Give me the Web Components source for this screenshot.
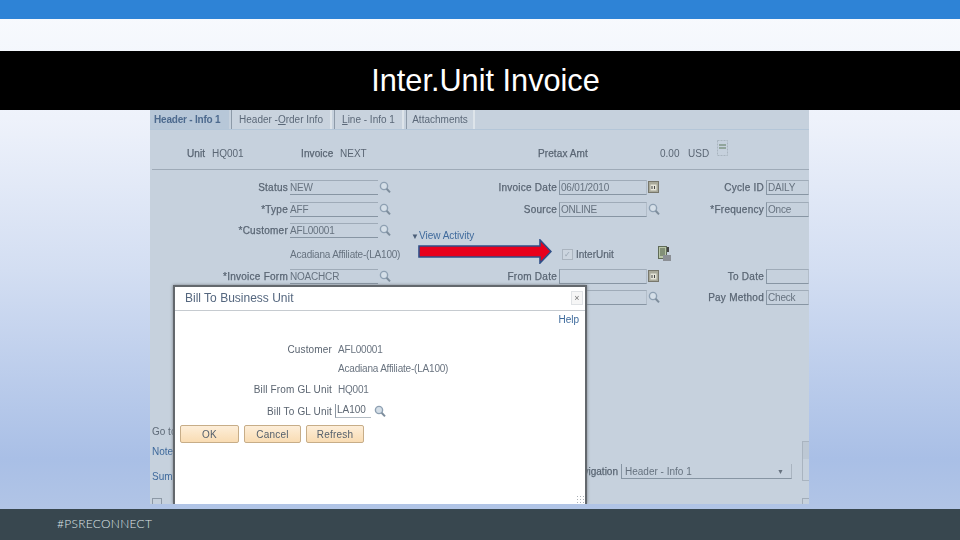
<!DOCTYPE html>
<html lang="en"><head><meta charset="utf-8"><title>Inter.Unit Invoice</title>
<style>
html,body{margin:0;padding:0;width:960px;height:540px;overflow:hidden;font-family:"Liberation Sans",Arial,sans-serif}
</style></head><body>
<psr-slide>
  <span slot="title">Inter.Unit Invoice</span>
  <span slot="footer">#PSRECONNECT</span>
  <psr-invoice></psr-invoice>
</psr-slide>
<script>
const def=(name,css,html)=>{customElements.define(name,class extends HTMLElement{
  connectedCallback(){ if(this.shadowRoot) return; const r=this.attachShadow({mode:'open'});
    r.innerHTML=`<style>${css}</style>${html}`; }
});};
const lens=`<svg width="12" height="13" viewBox="0 0 12 13" aria-hidden="true"><circle cx="5" cy="5" r="3.6" fill="#d5dfe8" stroke="#8ea0b2" stroke-width="1.4"/><path d="M7.6 7.8 11 11.4" stroke="#7d8d9c" stroke-width="2"/></svg>`;
const cal=`<svg width="11" height="12" viewBox="0 0 11 12" aria-hidden="true"><rect x=".5" y=".5" width="10" height="11" fill="#a9a99a" stroke="#77776c"/><rect x="2.5" y="3.5" width="6" height="6" fill="#e4e4d8"/><path d="M4 5v3M6.5 5v3" stroke="#444" stroke-width="1"/></svg>`;

def('psr-slide',`
 :host{display:flex;flex-direction:column;width:960px;height:540px;background:linear-gradient(#f9fbfe 0,#eef2fb 22%,#d3def2 50%,#a9bfe6 85%,#b6c8e6 100%)}
 .top{height:19px;background:#2e83d6;flex:none}
 .gap{height:32px;flex:none}
 .title{height:59px;flex:none;background:#000;color:#fff;display:flex;align-items:center;justify-content:center;font:30.7px "Liberation Sans",sans-serif;padding:1px 0 0 11px;box-sizing:border-box}
 .main{flex:1;min-height:0;padding-left:150px;overflow:hidden}
 .foot{height:31px;flex:none;background:#38474f;color:#dfe5e8;display:flex;align-items:center;padding:0 0 2px 57px;box-sizing:border-box;font:300 12px Lato,sans-serif;letter-spacing:.28px}
`,`<div class="top"></div><div class="gap"></div><div class="title"><slot name="title"></slot></div>
<div class="main"><slot></slot></div><div class="foot"><slot name="footer"></slot></div>`);

def('psr-tabs',`
 :host{display:flex;height:19px;border-bottom:1px solid #b4c6d8;font:10px "Liberation Sans",sans-serif;color:#5b6878}
 div{display:flex;align-items:center;justify-content:center;box-sizing:border-box;border-right:2px solid #dde4ea;border-left:1px solid #8d9aa8;background:#c9d3de;margin-right:2px}
 .a{width:79px;background:#b7c7d8;color:#4d6a8e;font-weight:700;border:0;letter-spacing:-.2px;justify-content:flex-start;padding-left:4px}
 u{text-decoration:underline}
`,`<div class="a">Header - Info 1</div><div style="width:101px">Header - <u>O</u>rder Info</div><div style="width:70px"><u>L</u>ine - Info 1</div><div style="width:69px">Attachments</div>`);

def('psr-field',`
 :host{display:flex;align-items:center;box-sizing:border-box;height:15px;border-top:1px solid #9fabb8;border-bottom:1px solid #8795a3;color:#66727f;font:10px "Liberation Sans",sans-serif;letter-spacing:-.2px;white-space:nowrap;overflow:hidden}
 :host([boxed]){border-left:1px solid #8795a3;border-right:1px solid #b2bdc9;padding-left:1px}
`,`<slot></slot>`);

def('psr-label',`
 :host{display:block;text-align:right;padding-right:2px;font:10px "Liberation Sans",sans-serif;color:#5a6674;white-space:nowrap;-webkit-text-stroke:.25px #5a6674;letter-spacing:.25px}
`,`<slot></slot>`);

def('psr-lookup',`:host{display:flex;align-items:center;height:13px;padding-left:1px}`,lens);
def('psr-cal',`:host{display:flex;align-items:center;height:13px;padding-left:1px}`,cal);

def('psr-arrow',`:host{position:absolute;left:268px;top:129px;width:134px;height:25px;display:block}`,
 `<svg width="134" height="25" viewBox="0 0 134 25" aria-hidden="true"><path d="M1 7H122V1L133 12.5 122 24V18H1Z" fill="#e8001c" stroke="#2f4f88" stroke-width="1.6"/></svg>`);

def('psr-button',`
 :host{display:flex;align-items:center;justify-content:center;box-sizing:border-box;height:18px;border:1px solid #c7ad88;border-radius:2px;background:linear-gradient(#fdeed9,#f9dcb3);color:#55606c;font:10px "Liberation Sans",sans-serif;letter-spacing:.2px}
`,`<slot></slot>`);

def('psr-modal',`
 :host{position:absolute;left:23px;top:175px;width:414px;height:219px;box-sizing:border-box;background:#fff;border:solid #63686d;border-width:2px 2px 0 2px;box-shadow:0 0 3px #7b8087;display:flex;flex-direction:column;font:10px "Liberation Sans",sans-serif;color:#5a6470}
 .head{height:24px;flex:none;border-bottom:1px solid #c6cbd0;display:flex;align-items:center;justify-content:space-between;padding:0 2px 2px 10px;box-sizing:border-box;font-size:12px;color:#55677f}
 .x{width:12px;height:14px;border:1px solid #dfe2e5;box-sizing:border-box;display:flex;align-items:center;justify-content:center;font-size:9px;color:#777;background:#f6f6f6}
 .help{text-align:right;padding:3px 6px 0 0;height:13px;color:#3d6a9c;flex:none}
 .rows{display:grid;grid-template-columns:157px auto;grid-template-rows:18px 20px 22px 22px;margin-top:13px;align-items:center;column-gap:6px;justify-content:start;font-size:10px}
 .l{text-align:right;white-space:nowrap;color:#5a6470;letter-spacing:.15px}
 .v{white-space:nowrap;color:#6a7480;letter-spacing:-.2px}
 .to{display:flex;align-items:center;margin-left:-3px}
 .in{width:36px;height:14px;border-bottom:1px solid #b4bcc4;border-left:1px solid #8b95a0;box-sizing:border-box;line-height:12px;padding-left:1px;color:#5e6874}
 .to svg{margin-left:3px}
 .btns{display:flex;gap:5px;padding-left:5px;margin-top:3px}
 .grip{margin-top:auto;align-self:flex-end;width:9px;height:9px;background:radial-gradient(circle,#aab0b6 .7px,transparent 1px) 0 0/3px 3px}
`,`<div class="head"><span>Bill To Business Unit</span><span class="x">×</span></div>
<div class="help">Help</div>
<div class="rows">
 <span class="l">Customer</span><span class="v">AFL00001</span>
 <span></span><span class="v">Acadiana Affiliate-(LA100)</span>
 <span class="l">Bill From GL Unit</span><span class="v">HQ001</span>
 <span class="l">Bill To GL Unit</span><span class="to"><span class="in">LA100</span>${lens}</span>
</div>
<div class="btns"><psr-button style="width:59px">OK</psr-button><psr-button style="width:57px">Cancel</psr-button><psr-button style="width:58px">Refresh</psr-button></div>
<div class="grip"></div>`);

def('psr-edge',`
 :host{position:absolute;left:2px;top:316px;width:30px;display:flex;flex-direction:column;white-space:nowrap;font:10px "Liberation Sans",sans-serif;color:#5f6b78}
 a{color:#3f6a9c;margin-top:9px}
 svg{margin-top:16px}
`,`<span>Go to</span><a>Notes</a><a style="margin-top:14px">Summary</a><svg width="10" height="9" viewBox="0 0 10 9" aria-hidden="true"><rect x=".5" y=".5" width="9" height="9" fill="none" stroke="#8d99a6"/></svg>`);

def('psr-invoice',`
 :host{display:block;position:relative;width:659px;height:394px;background:#c6d1dd;overflow:hidden;font:10px "Liberation Sans",sans-serif;color:#5a6674;filter:blur(.3px)}
 .summary{display:grid;grid-template-columns:35px 25px 89px 39px 198px 51px 71px 28px 29px 12px;height:40px;align-items:center;border-bottom:1px solid #9eaab7;margin-left:2px;padding-top:8px;box-sizing:border-box;white-space:nowrap}
 .summary b{font-weight:400;-webkit-text-stroke:.25px #5a6674;letter-spacing:.1px}
 .summary svg{margin-top:-11px;display:block}
 .form{display:grid;grid-template-columns:140px 88px 14px 167px 88px 14px 105px 43px;grid-template-rows:22px 22px 21px 24px 22px 21px;margin-top:6px;align-items:center;white-space:nowrap}
 .lnk{grid-column:4/9;padding:10px 0 0 19px;color:#3f6a9c}
 .tri{font-size:8px;color:#4c5f78}
 .name{grid-column:2/5;color:#66727f;letter-spacing:-.2px;padding-top:3px}
 .chk{grid-column:5;display:flex;align-items:center;gap:3px;padding:3px 0 0 3px;-webkit-text-stroke:.2px #5a6674}
 .bx{width:9px;height:9px;border:1px solid #aab4bf;background:#ccd5df;color:#98a5b3;font-size:8px;line-height:9px;text-align:center;-webkit-text-stroke:0}
 .doc{grid-column:6/9;padding-left:11px;display:flex}
 .bottom{display:grid;grid-template-columns:471px 171px 10px 7px;grid-template-rows:20px 21px 20px;margin-top:133px;align-items:center}
 .nav{grid-column:1;grid-row:2;text-align:right;padding-right:3px;-webkit-text-stroke:.25px #5a6674}
 .sel{grid-column:2;grid-row:2;height:15px;border-left:1px solid #8795a3;border-bottom:1px solid #8795a3;border-right:1px solid #a9b4c0;box-sizing:border-box;display:flex;justify-content:space-between;align-items:center;padding:0 7px 0 3px;color:#66727f;white-space:nowrap}
 .side{grid-column:4;grid-row:1/3;border:1px solid #a9b4c0;border-right:0;height:40px;box-sizing:border-box;align-self:start;background:linear-gradient(#bdc8d4 45%,#c6d1dd 45%)}
 .mini{grid-column:4;grid-row:3;width:7px;height:8px;border:1px solid #a2adb9;border-right:0;box-sizing:border-box;align-self:end;margin-bottom:-4px}
`,`<psr-tabs></psr-tabs>
<div class="summary">
 <span></span><b>Unit</b><span>HQ001</span><b>Invoice</b><span>NEXT</span><b>Pretax Amt</b><span></span><span>0.00</span><span>USD</span>
 <svg width="11" height="16" viewBox="0 0 11 16" aria-hidden="true"><rect x=".5" y=".5" width="10" height="15" fill="none" stroke="#a9b4bf" stroke-dasharray="2 1"/><path d="M2 5h7M2 8h7" stroke="#5f7a5c"/></svg>
</div>
<div class="form">
 <psr-label>Status</psr-label><psr-field>NEW</psr-field><psr-lookup></psr-lookup>
 <psr-label>Invoice Date</psr-label><psr-field boxed>06/01/2010</psr-field><psr-cal></psr-cal>
 <psr-label>Cycle ID</psr-label><psr-field boxed>DAILY</psr-field>

 <psr-label>*Type</psr-label><psr-field>AFF</psr-field><psr-lookup></psr-lookup>
 <psr-label>Source</psr-label><psr-field boxed>ONLINE</psr-field><psr-lookup></psr-lookup>
 <psr-label>*Frequency</psr-label><psr-field boxed>Once</psr-field>

 <psr-label>*Customer</psr-label><psr-field>AFL00001</psr-field><psr-lookup></psr-lookup>
 <span class="lnk"><span class="tri">▼</span>View Activity</span>

 <span></span><span class="name">Acadiana Affiliate-(LA100)</span>
 <span class="chk"><span class="bx">✓</span>InterUnit</span>
 <span class="doc"><svg width="13" height="15" viewBox="0 0 13 15" aria-hidden="true"><rect x=".5" y=".5" width="8" height="12" fill="#b9c6a8" stroke="#5f6b58"/><path d="M2 3h5M2 5h5M2 7h5M2 9h5" stroke="#4d5a48"/><rect x="5" y="9" width="8" height="6" fill="#8b8f95"/><path d="M10 1v5" stroke="#444" stroke-width="2"/></svg></span>

 <psr-label>*Invoice Form</psr-label><psr-field>NOACHCR</psr-field><psr-lookup></psr-lookup>
 <psr-label>From Date</psr-label><psr-field boxed></psr-field><psr-cal></psr-cal>
 <psr-label>To Date</psr-label><psr-field boxed></psr-field>

 <span></span><psr-field></psr-field><psr-lookup></psr-lookup>
 <span></span><psr-field boxed></psr-field><psr-lookup></psr-lookup>
 <psr-label>Pay Method</psr-label><psr-field boxed>Check</psr-field>
</div>
<div class="bottom">
 <span class="nav">Navigation</span>
 <span class="sel">Header - Info 1<span style="font-size:7px">▼</span></span>
 <span class="side"></span>
 <span class="mini"></span>
</div>
<psr-edge></psr-edge>
<psr-arrow></psr-arrow>
<psr-modal></psr-modal>`);
</script>
</body></html>
